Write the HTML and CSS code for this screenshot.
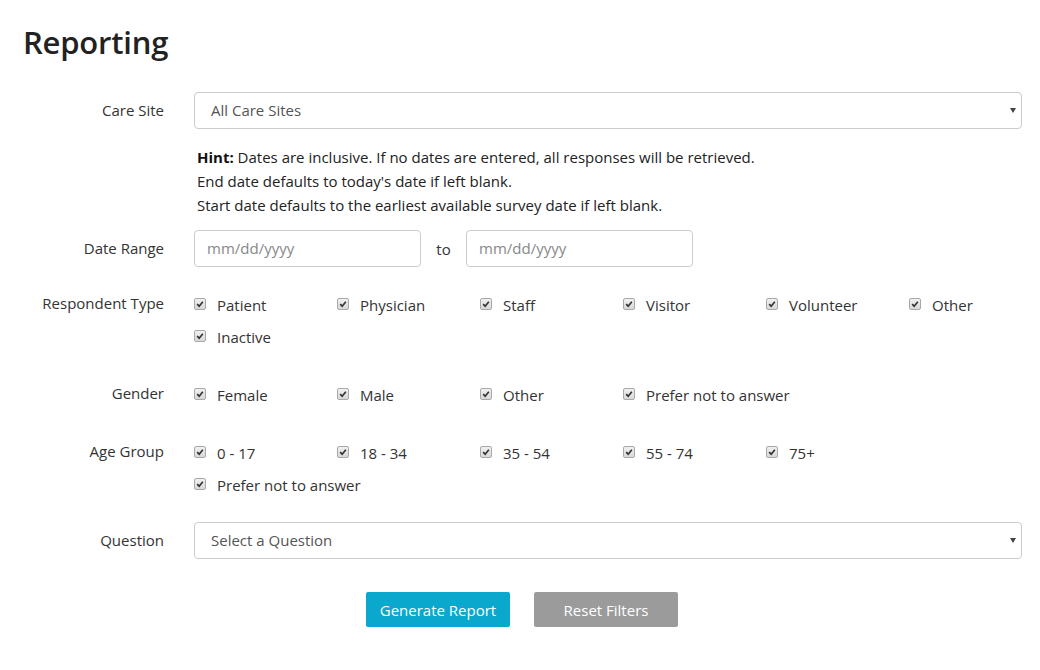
FILE: index.html
```html
<!DOCTYPE html>
<html lang="en">
<head>
<meta charset="utf-8">
<title>Reporting</title>
<link rel="stylesheet" href="styles.css">
</head>
<body>
<div class="page">
  <h1 class="title">Reporting</h1>

  <div class="form-row">
    <div class="label label-input">Care Site</div>
    <div class="select"><span>All Care Sites</span><span class="caret"></span></div>
  </div>

  <div class="form-row hint-row">
    <div></div>
    <div class="hint">
      <div><b>Hint:</b> Dates are inclusive. If no dates are entered, all responses will be retrieved.</div>
      <div>End date defaults to today's date if left blank.</div>
      <div>Start date defaults to the earliest available survey date if left blank.</div>
    </div>
  </div>

  <div class="form-row date-row">
    <div class="label label-input">Date Range</div>
    <div class="dates">
      <div class="input placeholder">mm/dd/yyyy</div>
      <span class="to">to</span>
      <div class="input placeholder">mm/dd/yyyy</div>
    </div>
  </div>

  <div class="form-row check-row">
    <div class="label label-check">Respondent Type</div>
    <div class="checks">
      <div class="check"><span class="box"><svg viewBox="0 0 12 12"><path d="M2.6 6.2 L5 8.6 L9.4 3.4" /></svg></span>Patient</div>
      <div class="check"><span class="box"><svg viewBox="0 0 12 12"><path d="M2.6 6.2 L5 8.6 L9.4 3.4" /></svg></span>Physician</div>
      <div class="check"><span class="box"><svg viewBox="0 0 12 12"><path d="M2.6 6.2 L5 8.6 L9.4 3.4" /></svg></span>Staff</div>
      <div class="check"><span class="box"><svg viewBox="0 0 12 12"><path d="M2.6 6.2 L5 8.6 L9.4 3.4" /></svg></span>Visitor</div>
      <div class="check"><span class="box"><svg viewBox="0 0 12 12"><path d="M2.6 6.2 L5 8.6 L9.4 3.4" /></svg></span>Volunteer</div>
      <div class="check"><span class="box"><svg viewBox="0 0 12 12"><path d="M2.6 6.2 L5 8.6 L9.4 3.4" /></svg></span>Other</div>
      <div class="check"><span class="box"><svg viewBox="0 0 12 12"><path d="M2.6 6.2 L5 8.6 L9.4 3.4" /></svg></span>Inactive</div>
    </div>
  </div>

  <div class="form-row check-row">
    <div class="label label-check">Gender</div>
    <div class="checks">
      <div class="check"><span class="box"><svg viewBox="0 0 12 12"><path d="M2.6 6.2 L5 8.6 L9.4 3.4" /></svg></span>Female</div>
      <div class="check"><span class="box"><svg viewBox="0 0 12 12"><path d="M2.6 6.2 L5 8.6 L9.4 3.4" /></svg></span>Male</div>
      <div class="check"><span class="box"><svg viewBox="0 0 12 12"><path d="M2.6 6.2 L5 8.6 L9.4 3.4" /></svg></span>Other</div>
      <div class="check wide"><span class="box"><svg viewBox="0 0 12 12"><path d="M2.6 6.2 L5 8.6 L9.4 3.4" /></svg></span>Prefer not to answer</div>
    </div>
  </div>

  <div class="form-row check-row">
    <div class="label label-check">Age Group</div>
    <div class="checks">
      <div class="check"><span class="box"><svg viewBox="0 0 12 12"><path d="M2.6 6.2 L5 8.6 L9.4 3.4" /></svg></span>0 - 17</div>
      <div class="check"><span class="box"><svg viewBox="0 0 12 12"><path d="M2.6 6.2 L5 8.6 L9.4 3.4" /></svg></span>18 - 34</div>
      <div class="check"><span class="box"><svg viewBox="0 0 12 12"><path d="M2.6 6.2 L5 8.6 L9.4 3.4" /></svg></span>35 - 54</div>
      <div class="check"><span class="box"><svg viewBox="0 0 12 12"><path d="M2.6 6.2 L5 8.6 L9.4 3.4" /></svg></span>55 - 74</div>
      <div class="check"><span class="box"><svg viewBox="0 0 12 12"><path d="M2.6 6.2 L5 8.6 L9.4 3.4" /></svg></span>75+</div>
      <div class="check break"><span class="box"><svg viewBox="0 0 12 12"><path d="M2.6 6.2 L5 8.6 L9.4 3.4" /></svg></span>Prefer not to answer</div>
    </div>
  </div>

  <div class="form-row question-row">
    <div class="label label-input">Question</div>
    <div class="select"><span>Select a Question</span><span class="caret"></span></div>
  </div>

  <div class="buttons">
    <button class="btn btn-primary">Generate Report</button>
    <button class="btn btn-grey">Reset Filters</button>
  </div>
</div>
</body>
</html>
```

FILE: styles.css
```css
* { box-sizing: border-box; }

html, body {
  margin: 0;
  padding: 0;
  background: #fff;
}

body {
  font-family: "Open Sans", "Noto Sans", sans-serif;
  font-size: 15px;
  color: #333;
}

.page {
  width: 1040px;
  padding: 22px 3px 0 8px;
}

.title {
  margin: 0 0 30px 15px;
  font-size: 31px;
  font-weight: 600;
  line-height: 40px;
  color: #222;
  letter-spacing: -0.2px;
}

.form-row {
  display: grid;
  grid-template-columns: 156px 828px;
  column-gap: 30px;
}

.label {
  text-align: right;
  color: #333;
}

.label-input { line-height: 37px; }
.label-check { line-height: 28px; }

.select {
  position: relative;
  height: 37px;
  border: 1px solid #ccc;
  border-radius: 4px;
  padding: 0 16px;
  line-height: 35px;
  color: #555;
}

.caret {
  position: absolute;
  right: 5px;
  top: 15px;
  width: 0;
  height: 0;
  border-left: 3px solid transparent;
  border-right: 3px solid transparent;
  border-top: 5px solid #444;
}

.hint-row { margin-top: 16px; }

.hint {
  line-height: 24px;
  color: #222;
  padding-left: 3px;
}

.hint b { font-weight: 700; color: #111; }

.date-row { margin-top: 13px; }

.dates {
  display: flex;
  align-items: center;
}

.input {
  width: 227px;
  height: 37px;
  border: 1px solid #ccc;
  border-radius: 4px;
  padding: 0 12px;
  line-height: 35px;
}

.placeholder { color: #888; }

.to {
  width: 45px;
  text-align: center;
  color: #333;
}

.check-row { margin-top: 22px; }
.check-row + .check-row { margin-top: 26px; }

.checks {
  display: grid;
  grid-template-columns: repeat(6, 143px);
  width: 828px;
}

.check {
  display: flex;
  align-items: center;
  height: 32px;
  white-space: nowrap;
  color: #333;
}

.check.wide { grid-column: span 2; }
.check.break { grid-column: 1 / span 2; }

.box {
  display: inline-block;
  width: 12px;
  height: 12px;
  margin-right: 11px;
  border: 1px solid #a9a9a9;
  border-radius: 2px;
  background: linear-gradient(#f0f0f0, #d8d8d8);
  position: relative;
  top: -1px;
}

.box svg {
  display: block;
  width: 10px;
  height: 10px;
}

.box path {
  fill: none;
  stroke: #333;
  stroke-width: 2;
}

.question-row { margin-top: 21px; }

.buttons {
  display: flex;
  justify-content: center;
  gap: 24px;
  margin-top: 33px;
  width: 1028px;
}

.btn {
  width: 144px;
  height: 35px;
  border: none;
  border-radius: 2px;
  font-family: inherit;
  font-size: 15px;
  color: #fff;
  cursor: pointer;
}

.btn-primary { background: #0aa8cd; }
.btn-grey { background: #9b9b9b; }
```
